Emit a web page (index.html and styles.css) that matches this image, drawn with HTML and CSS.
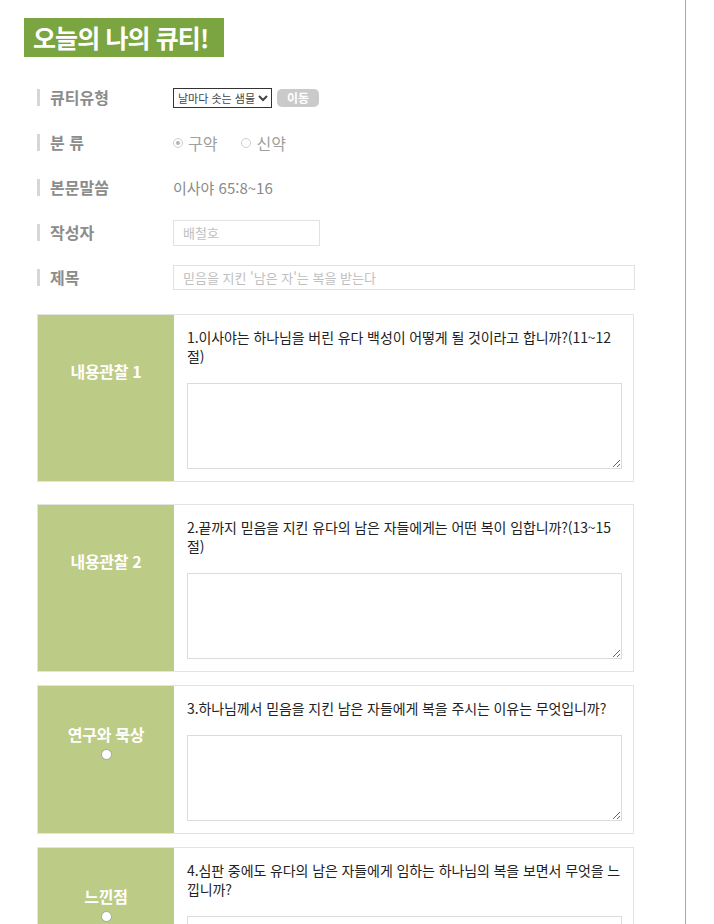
FILE: index.html
```html
<!DOCTYPE html>
<html lang="ko">
<head>
    <meta charset="UTF-8">
    <meta name="viewport" content="width=device-width, initial-scale=1.0">
    <title>오늘의 나의 큐티</title>
    <link rel="stylesheet" href="styles.css">
</head>
<body>
    <div class="page">
        <h1 class="title">오늘의 나의 큐티!</h1>

        <div class="rows">
            <div class="row">
                <span class="label">큐티유형</span>
                <select class="qt-select">
                    <option>날마다 솟는 샘물</option>
                </select>
                <button class="go-btn">이동</button>
            </div>
            <div class="row">
                <span class="label">분 류</span>
                <span class="radio checked"></span><span class="radio-text">구약</span>
                <span class="radio"></span><span class="radio-text">신약</span>
            </div>
            <div class="row">
                <span class="label">본문말씀</span>
                <span class="verse">이사야 65:8~16</span>
            </div>
            <div class="row">
                <span class="label">작성자</span>
                <input type="text" class="field field-short" placeholder="배철호">
            </div>
            <div class="row">
                <span class="label">제목</span>
                <input type="text" class="field field-long" placeholder="믿음을 지킨 '남은 자'는 복을 받는다">
            </div>
        </div>

        <div class="card card-first">
            <div class="card-head">내용관찰 1</div>
            <div class="card-body">
                <p class="question">1.이사야는 하나님을 버린 유다 백성이 어떻게 될 것이라고 합니까?(11~12절)</p>
                <textarea class="answer"></textarea>
            </div>
        </div>

        <div class="card">
            <div class="card-head">내용관찰 2</div>
            <div class="card-body">
                <p class="question">2.끝까지 믿음을 지킨 유다의 남은 자들에게는 어떤 복이 임합니까?(13~15절)</p>
                <textarea class="answer"></textarea>
            </div>
        </div>

        <div class="card">
            <div class="card-head has-dot">연구와 묵상<span class="dot"></span></div>
            <div class="card-body">
                <p class="question">3.하나님께서 믿음을 지킨 남은 자들에게 복을 주시는 이유는 무엇입니까?</p>
                <textarea class="answer"></textarea>
            </div>
        </div>

        <div class="card">
            <div class="card-head has-dot">느낀점<span class="dot"></span></div>
            <div class="card-body">
                <p class="question">4.심판 중에도 유다의 남은 자들에게 임하는 하나님의 복을 보면서 무엇을 느낍니까?</p>
                <textarea class="answer"></textarea>
            </div>
        </div>
    </div>
</body>
</html>
```

FILE: styles.css
```css
body {
    margin: 0;
    padding: 0;
    font-family: "Noto Sans CJK KR", "Noto Sans", sans-serif;
    background-color: #fff;
}
.page {
    width: 686px;
    min-height: 100vh;
    border-right: 1px solid #a9a9a9;
    padding-top: 18px;
    box-sizing: border-box;
}
.title {
    display: inline-block;
    margin: 0 0 0 24px;
    width: 200px;
    height: 39px;
    padding-left: 9px;
    box-sizing: border-box;
    background-color: #7ba540;
    color: #fff;
    font-size: 25px;
    font-weight: bold;
    line-height: 39px;
    letter-spacing: -0.9px;
    white-space: nowrap;
}
.rows {
    margin: 18px 0 14px 37px;
}
.row {
    display: flex;
    align-items: center;
    height: 45px;
}
.label {
    width: 123px;
    padding-left: 10px;
    border-left: 3px solid #d6d6d6;
    color: #8c8c8c;
    font-size: 16px;
    font-weight: bold;
    line-height: 17px;
}
.qt-select {
    width: 99px;
    height: 20px;
    padding: 0;
    border: 1px solid #333;
    border-radius: 0;
    background-color: #fff;
    color: #444;
    font-family: inherit;
    font-size: 11px;
}
.go-btn {
    margin-left: 5px;
    width: 42px;
    height: 18px;
    padding: 0;
    border: none;
    border-radius: 5px;
    background-color: #cacaca;
    color: #fff;
    font-family: inherit;
    font-size: 12px;
    font-weight: bold;
    line-height: 18px;
}
.radio {
    width: 8px;
    height: 8px;
    border: 1px solid #cfcfcf;
    border-radius: 50%;
    position: relative;
}
.radio.checked::after {
    content: "";
    position: absolute;
    left: 2px;
    top: 2px;
    width: 4px;
    height: 4px;
    border-radius: 50%;
    background-color: #b5b5b5;
}
.radio-text {
    margin: 0 24px 0 5px;
    color: #a0a0a0;
    font-size: 16px;
}
.verse {
    color: #8a8a8a;
    font-size: 15px;
}
.field {
    box-sizing: border-box;
    border: 1px solid #e2e2e2;
    padding: 0 9px;
    font-family: inherit;
    font-size: 13px;
    outline: none;
}
.field::placeholder {
    color: #c0c0c0;
}
.field-short {
    width: 147px;
    height: 26px;
}
.field-long {
    width: 462px;
    height: 25px;
}
.card {
    display: flex;
    width: 597px;
    margin: 0 0 13px 37px;
    border: 1px solid #e3e3e3;
    box-sizing: border-box;
}
.card-first {
    margin-bottom: 22px;
}
.card-head {
    display: flex;
    flex-direction: column;
    align-items: center;
    width: 136px;
    flex-shrink: 0;
    padding-top: 46px;
    box-sizing: border-box;
    background-color: #bccb86;
    color: #fff;
    font-size: 16px;
    font-weight: bold;
    line-height: 20px;
    letter-spacing: -0.3px;
}
.card-head.has-dot {
    padding-top: 38px;
}
.dot {
    margin-top: 5px;
    width: 9px;
    height: 9px;
    border: 1px solid #a5a5a5;
    border-radius: 50%;
    background-color: #fff;
}
.card-body {
    flex: 1;
    padding: 13px 11px 12px 13px;
}
.question {
    margin: 0 0 17px 0;
    color: #222;
    font-size: 14px;
    line-height: 19px;
    letter-spacing: -0.1px;
}
.answer {
    display: block;
    width: 100%;
    height: 86px;
    box-sizing: border-box;
    border: 1px solid #dcdcdc;
    font-family: inherit;
}
```
